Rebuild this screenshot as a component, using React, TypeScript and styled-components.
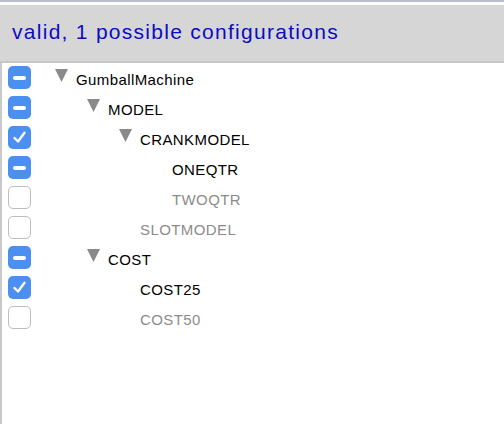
import React from "react";
import styled, { createGlobalStyle } from "styled-components";

const Global = createGlobalStyle`
  html, body { margin: 0; padding: 0; background: #ffffff; }
  body { font-family: "Liberation Sans", Arial, sans-serif; }
  * { box-sizing: border-box; }
`;

const Page = styled.div`
  width: 504px;
  height: 424px;
  display: flex;
  flex-direction: column;
  background: #ffffff;
  overflow: hidden;
`;

const TopStrip = styled.div`
  height: 5px;
  border-top: 2px solid #babdcc;
  background: #ffffff;
  flex: none;
`;

const Header = styled.div`
  height: 58px;
  flex: none;
  background: #d6d6d6;
  border-bottom: 2px solid #c6c6c6;
  display: flex;
  align-items: center;
  padding-left: 12px;
  padding-bottom: 2px;
  font-size: 21px;
  color: #0c0cc2;
  letter-spacing: 1.28px;
`;

const Tree = styled.div`
  flex: 1;
  border-left: 2px solid #c9c9c9;
  display: flex;
  flex-direction: column;
`;

const Row = styled.div`
  height: 30px;
  display: flex;
  align-items: center;
  padding-left: 6px;
`;

type BoxState = "partial" | "checked" | "empty";

const Box = styled.div<{ $state: BoxState }>`
  width: 23px;
  height: 23px;
  border-radius: 5px;
  flex: none;
  display: flex;
  align-items: center;
  justify-content: center;
  background: ${(p) => (p.$state === "empty" ? "#ffffff" : "#4b8ff0")};
  border: ${(p) => (p.$state === "empty" ? "1px solid #bdbdbd" : "none")};
  margin-top: -1px;
`;

const Dash = styled.div`
  width: 13px;
  height: 4px;
  border-radius: 2px;
  background: #ffffff;
`;

const Label = styled.div<{ $level: number; $dim: boolean }>`
  margin-left: ${(p) => 45 + p.$level * 32}px;
  display: flex;
  align-items: center;
  font-size: 15px;
  letter-spacing: 0.4px;
  color: ${(p) => (p.$dim ? "#8c8c8c" : "#000000")};
  padding-top: 3px;
`;

const Toggle = styled.svg`
  width: 13px;
  height: 13px;
  margin-left: -21px;
  margin-right: 8px;
  margin-top: -9px;
  flex: none;
`;

type Item = { label: string; level: number; state: BoxState; branch?: boolean };

const items: Item[] = [
  { label: "GumballMachine", level: 0, state: "partial", branch: true },
  { label: "MODEL", level: 1, state: "partial", branch: true },
  { label: "CRANKMODEL", level: 2, state: "checked", branch: true },
  { label: "ONEQTR", level: 3, state: "partial" },
  { label: "TWOQTR", level: 3, state: "empty" },
  { label: "SLOTMODEL", level: 2, state: "empty" },
  { label: "COST", level: 1, state: "partial", branch: true },
  { label: "COST25", level: 2, state: "checked" },
  { label: "COST50", level: 2, state: "empty" },
];

function Check({ state }: { state: BoxState }) {
  return (
    <Box $state={state}>
      {state === "partial" && <Dash />}
      {state === "checked" && (
        <svg width="15" height="15" viewBox="0 0 15 15">
          <path d="M2.5 8 L6 11.5 L12.5 2.8" fill="none" stroke="#ffffff" strokeWidth="2.4" strokeLinecap="round" strokeLinejoin="round" />
        </svg>
      )}
    </Box>
  );
}

export default function App() {
  return (
    <Page>
      <Global />
      <TopStrip />
      <Header>valid, 1 possible configurations</Header>
      <Tree>
        {items.map((it) => (
          <Row key={it.label}>
            <Check state={it.state} />
            <Label $level={it.level} $dim={it.state === "empty"}>
              {it.branch && (
                <Toggle viewBox="0 0 13 13">
                  <path d="M0 0 H13 L6.5 13 Z" fill="#8a8a8a" />
                </Toggle>
              )}
              {it.label}
            </Label>
          </Row>
        ))}
      </Tree>
    </Page>
  );
}
